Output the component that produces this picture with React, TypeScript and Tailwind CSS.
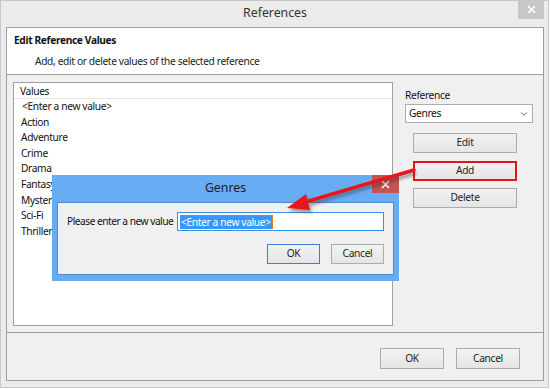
import { ChevronDown } from 'lucide-react';

const values = ['<Enter a new value>', 'Action', 'Adventure', 'Crime', 'Drama', 'Fantasy', 'Mystery', 'Sci-Fi', 'Thriller'];

const font = { fontFamily: '"Noto Sans", "Open Sans", sans-serif' };

const WinButton = ({ label, className = '' }: { label: string; className?: string }) => (
  <div
    className={`flex items-center justify-center border border-[#acacac] bg-gradient-to-b from-[#f2f2f2] to-[#e5e5e5] text-[10.2px] tracking-[-0.3px] text-[#1e1e1e] ${className}`}
  >
    {label}
  </div>
);

const CloseGlyph = () => (
  <svg width="9" height="9" viewBox="0 0 9 9">
    <path d="M1 1 L8 8 M8 1 L1 8" stroke="white" strokeWidth="1.6" />
  </svg>
);

export default function App() {
  return (
    <div className="relative w-[550px] h-[389px] bg-white overflow-hidden" style={font}>
      {/* Main window */}
      <div className="w-[549px] h-[388px] bg-[#ebebeb] border border-[#c8c8c8] flex flex-col pl-[5px] pr-[4px] pb-[6px]">
        <div className="relative h-[26px] shrink-0 flex items-center justify-center pb-[2px] text-[12.3px] text-[#333]">
          References
          <div className="absolute right-[0px] top-[-1px] w-[26px] h-[19px] bg-[#c7c7c7] flex items-center justify-center">
            <CloseGlyph />
          </div>
        </div>

        <div className="flex-1 flex flex-col border border-[#9d9d9d] bg-[#f0f0f0] text-[10.2px] tracking-[-0.35px]">
          {/* Header */}
          <div className="h-[47px] shrink-0 bg-white border-b border-[#9d9d9d] pl-[7px] pt-[5px]">
            <div className="font-bold text-[#111]">Edit Reference Values</div>
            <div className="text-[#222] pl-[21px] pt-[6px]">Add, edit or delete values of the selected reference</div>
          </div>

          {/* Body */}
          <div className="flex-1 flex pl-[6px] pt-[7px] pb-[6px] border-b border-[#9d9d9d]">
            <div className="w-[380px] bg-white border border-[#a0a0a0] flex flex-col">
              <div className="h-[16px] shrink-0 border-b border-[#e5e5e5] pl-[6px] leading-[16px] text-[#111]">Values</div>
              <div className="flex flex-col">
                {values.map((v, i) => (
                  <div key={v} className={`h-[15.6px] leading-[15.6px] text-[#111] ${i === 0 ? 'pl-[8px]' : 'pl-[7px]'}`}>
                    {v}
                  </div>
                ))}
              </div>
            </div>

            <div className="flex-1 flex flex-col pl-[12px] pr-[10px] pt-[6px]">
              <div className="text-[#111] leading-[14px]">Reference</div>
              <div className="mt-[2px] h-[19px] bg-white border border-[#acacac] flex items-center justify-between pl-[3px] pr-[3px] text-[#111]">
                Genres
                <ChevronDown size={10} strokeWidth={2} className="text-[#444]" />
              </div>
              <div className="flex flex-col gap-[7.5px] mt-[10px] pl-[8px] pr-[16px]">
                <WinButton label="Edit" className="h-[20px]" />
                <WinButton label="Add" className="h-[20px] !border-[#e5141b] border-2" />
                <WinButton label="Delete" className="h-[20px]" />
              </div>
            </div>
          </div>

          {/* Footer */}
          <div className="h-[47px] shrink-0 flex items-start justify-end gap-[12px] pt-[15px] pr-[23px]">
            <WinButton label="OK" className="w-[64px] h-[21px]" />
            <WinButton label="Cancel" className="w-[64px] h-[21px]" />
          </div>
        </div>
      </div>

      {/* Genres input dialog */}
      <div className="absolute left-[52px] top-[175px] w-[347px] h-[106px] bg-[#68acf4] flex flex-col px-[5px] pb-[6px]">
        <div className="relative h-[27px] shrink-0 flex items-center justify-center pb-[1px] text-[12.3px] text-[#1c1c1c]">
          Genres
          <div className="absolute right-[-5px] top-0 w-[27px] h-[18px] bg-[#c65252] flex items-center justify-center">
            <CloseGlyph />
          </div>
        </div>
        <div className="flex-1 bg-[#f0f0f0] border border-[#4f8ac9] flex flex-col px-[9px] pt-[9px] text-[10.2px] tracking-[-0.35px]">
          <div className="flex items-center">
            <span className="text-[#111] w-[110px] whitespace-nowrap tracking-[-0.5px]">Please enter a new value</span>
            <div className="w-[207px] h-[19px] bg-white border border-[#3c8ee0] flex items-center pl-[2px]">
              <span className="bg-[#3399ff] text-white leading-[14px] px-[1px] border-r border-[#e87b20] whitespace-nowrap">&lt;Enter a new value&gt;</span>
            </div>
          </div>
          <div className="flex justify-end gap-[11px] mt-[13px]">
            <WinButton label="OK" className="w-[53px] h-[20px] !border-[#3c7fd0]" />
            <WinButton label="Cancel" className="w-[53px] h-[20px]" />
          </div>
        </div>
      </div>

      {/* Red arrow */}
      <svg className="absolute left-0 top-0 pointer-events-none" width="550" height="389">
        <defs>
          <filter id="sh" x="-20%" y="-20%" width="140%" height="140%">
            <feGaussianBlur stdDeviation="1.5" />
          </filter>
        </defs>
        <g transform="translate(2 3)" opacity="0.45" filter="url(#sh)">
          <line x1="414" y1="170" x2="302" y2="203" stroke="#333" strokeWidth="3.5" />
          <polygon points="287,208 306,194 310,210" fill="#333" />
        </g>
        <line x1="414" y1="170" x2="302" y2="203" stroke="#e8161c" strokeWidth="3.5" strokeLinecap="round" />
        <polygon points="287,208 306,194 310,210" fill="#e8161c" />
      </svg>
    </div>
  );
}
